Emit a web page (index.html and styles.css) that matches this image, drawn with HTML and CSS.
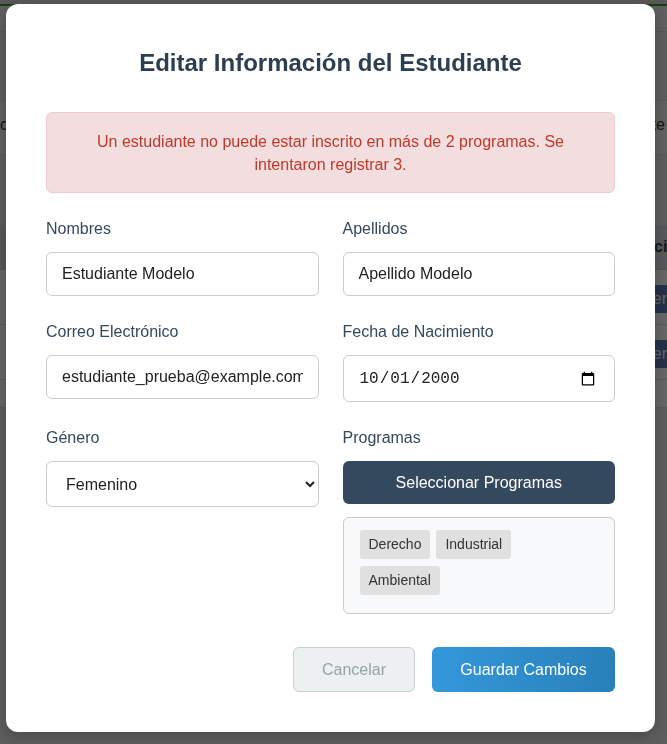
FILE: index.html
```html
<!DOCTYPE html>
<html lang="es">
<head>
<meta charset="utf-8">
<title>Editar Estudiante</title>
<link rel="stylesheet" href="styles.css">
</head>
<body>
<div class="page">
  <div class="topbar"></div>
  <div class="nav"></div>
  <div class="intro">
    <span class="intro-left">control de estudiantes</span>
    <span class="intro-right">Nuevo estudiante</span>
  </div>
  <div class="table">
    <div class="thead"><span class="th-last">Acción</span></div>
    <div class="trow"><span class="row-btn">Ver</span></div>
    <div class="trow"><span class="row-btn">Ver</span></div>
    <div class="trow short"></div>
  </div>
</div>

<div class="overlay">
  <div class="modal">
    <h2 class="modal-title">Editar Información del Estudiante</h2>
    <div class="alert">Un estudiante no puede estar inscrito en más de 2 programas. Se intentaron registrar 3.</div>
    <form class="form-grid">
      <div class="group">
        <label class="label">Nombres</label>
        <input class="input" type="text" value="Estudiante Modelo">
      </div>
      <div class="group">
        <label class="label">Apellidos</label>
        <input class="input" type="text" value="Apellido Modelo">
      </div>
      <div class="group">
        <label class="label">Correo Electrónico</label>
        <input class="input" type="email" value="estudiante_prueba@example.com">
      </div>
      <div class="group">
        <label class="label">Fecha de Nacimiento</label>
        <input class="input date" type="date" value="2000-10-01">
      </div>
      <div class="group">
        <label class="label">Género</label>
        <select class="select">
          <option>Masculino</option>
          <option selected>Femenino</option>
          <option>Otro</option>
        </select>
      </div>
      <div class="group">
        <label class="label">Programas</label>
        <button type="button" class="btn-programs">Seleccionar Programas</button>
        <div class="tags">
          <span class="tag">Derecho</span>
          <span class="tag">Industrial</span>
          <span class="tag">Ambiental</span>
        </div>
      </div>
    </form>
    <div class="footer">
      <button type="button" class="btn btn-cancel">Cancelar</button>
      <button type="button" class="btn btn-save">Guardar Cambios</button>
    </div>
  </div>
</div>
</body>
</html>
```

FILE: styles.css
```css
* { box-sizing: border-box; }

html, body {
  margin: 0;
  padding: 0;
  overflow: hidden;
}

body {
  width: 667px;
  height: 744px;
  background: #e8e9e8;
  font-family: "Liberation Sans", Arial, sans-serif;
}

/* underlying page */
.page {
  width: 667px;
}
.topbar {
  height: 4px;
  background: #dcdcdc;
}
.nav {
  height: 28px;
  border-top: 2px solid #3c9a46;
  background: #eeefee;
  border-bottom: 1px solid #d8d8d8;
}
.intro {
  margin-top: 68px;
  height: 55px;
  background: #f3f3f3;
  border-top: 1px solid #dddddd;
  border-bottom: 1px solid #dddddd;
  display: flex;
  justify-content: space-between;
  align-items: center;
  padding: 0 2px 6px 0;
  font-size: 16px;
  color: #333;
  white-space: nowrap;
}
.table {
  margin-top: 70px;
  background: #ffffff;
}
.thead {
  height: 45px;
  background: #d9dcdf;
  display: flex;
  justify-content: flex-end;
  align-items: center;
  font-size: 16px;
  font-weight: bold;
  color: #2c3e50;
  border-bottom: 1px solid #cccccc;
  white-space: nowrap;
}
.th-last { margin-right: -20px; }
.trow {
  height: 55px;
  border-bottom: 1px solid #dddddd;
  display: flex;
  justify-content: flex-end;
  align-items: center;
}
.trow.short { height: 28px; }
.row-btn {
  background: #5b7db5;
  color: #ffffff;
  font-size: 16px;
  line-height: 18px;
  padding: 5px 12px;
  margin-top: 4px;
  margin-right: -12px;
  border-radius: 4px;
}

/* overlay + modal */
.overlay {
  position: fixed;
  inset: 0;
  background: rgba(0, 0, 0, 0.6);
  display: flex;
  align-items: flex-start;
  padding: 4px 12px 0 6px;
}
.modal {
  width: 649px;
  background: #ffffff;
  border-radius: 12px;
  padding: 40px;
  box-shadow: 0 4px 16px rgba(0, 0, 0, 0.25);
}
.modal-title {
  margin: 5px 0 35px;
  font-size: 24px;
  line-height: 28px;
  font-weight: bold;
  text-align: center;
  color: #2c3e50;
}
.alert {
  background: #f2dede;
  border: 1px solid #ecccd0;
  border-radius: 6px;
  color: #c0392b;
  font-size: 16px;
  line-height: 23px;
  text-align: center;
  padding: 17px 15px 16px;
  margin-bottom: 25px;
}

.form-grid {
  display: grid;
  grid-template-columns: 1fr 1fr;
  column-gap: 24px;
  row-gap: 25px;
  align-items: start;
}
.group {
  display: flex;
  flex-direction: column;
}
.label {
  font-size: 16px;
  line-height: 22px;
  color: #34495e;
  margin-bottom: 12px;
}
.input {
  height: 44px;
  width: 100%;
  border: 1px solid #cccccc;
  border-radius: 6px;
  padding: 0 15px;
  font-family: "Liberation Sans", Arial, sans-serif;
  font-size: 16px;
  color: #222222;
  background: #ffffff;
}
.input.date {
  height: 47px;
  font-family: "Liberation Mono", monospace;
  font-size: 16px;
  padding: 0 16px 0 15px;
}
.select {
  height: 46px;
  width: 100%;
  border: 1px solid #cccccc;
  border-radius: 6px;
  padding: 0 15px;
  font-family: "Liberation Sans", Arial, sans-serif;
  font-size: 16px;
  color: #222222;
  background: #ffffff;
}
.btn-programs {
  height: 43px;
  width: 100%;
  border: none;
  border-radius: 6px;
  background: #34495e;
  color: #ffffff;
  font-family: "Liberation Sans", Arial, sans-serif;
  font-size: 16px;
  margin-bottom: 13px;
}
.tags {
  display: flex;
  flex-wrap: wrap;
  align-content: flex-start;
  background: #f8f9fa;
  border: 1px solid #cccccc;
  border-radius: 6px;
  padding: 12px 20px 11px 16px;
  min-height: 97px;
}
.tag {
  background: #e0e0e0;
  color: #333333;
  font-size: 14px;
  line-height: 17px;
  padding: 6px 9px;
  border-radius: 3px;
  margin: 0 6px 7px 0;
}

.footer {
  display: flex;
  justify-content: flex-end;
  gap: 17px;
  margin-top: 33px;
}
.btn {
  height: 45px;
  padding: 0 28px;
  border-radius: 6px;
  font-family: "Liberation Sans", Arial, sans-serif;
  font-size: 16px;
}
.btn-cancel {
  width: 122px;
  background: #ecf0f1;
  border: 1px solid #c9cfd1;
  color: #95a5a6;
}
.btn-save {
  width: 183px;
  border: none;
  background: linear-gradient(90deg, #3498db, #2980b9);
  color: #ffffff;
}
```
